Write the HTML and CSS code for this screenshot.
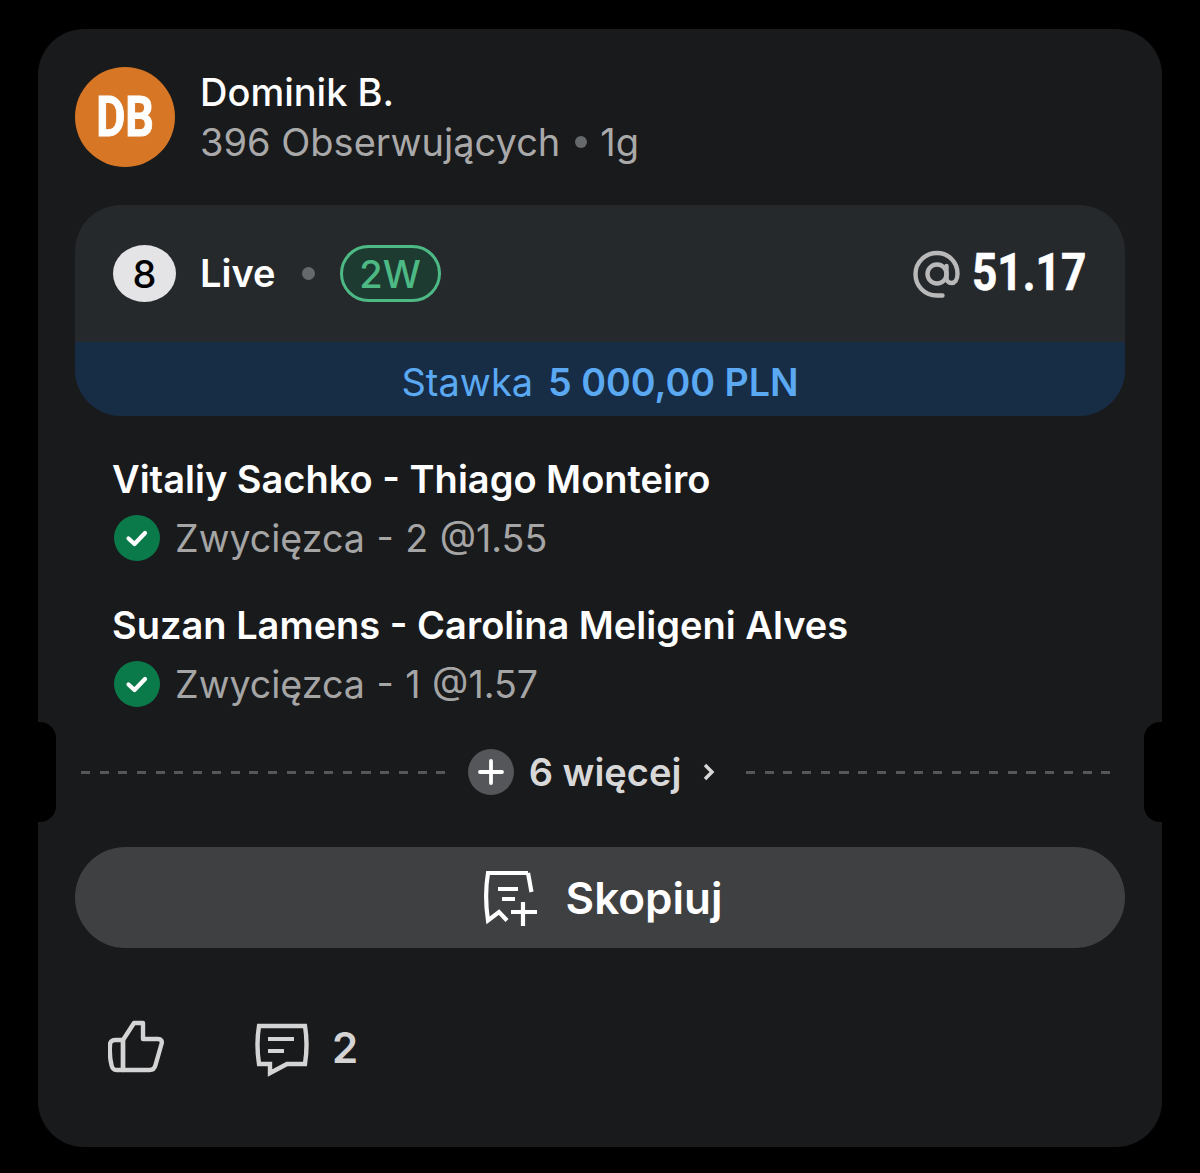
FILE: index.html
```html
<!DOCTYPE html>
<html lang="pl">
<head>
  <meta charset="UTF-8" />
  <meta name="viewport" content="width=device-width, initial-scale=1.0" />
  <title>Dominik B.</title>
  <link rel="stylesheet" href="styles.css">
</head>
<body>
  <main class="card">
    <span class="notch notch-left"></span>
    <span class="notch notch-right"></span>

    <header class="user">
      <div class="avatar"><span class="avatar-text">DB</span></div>
      <div class="user-info">
        <div class="user-name">Dominik B.</div>
        <div class="user-meta">396 Obserwujących<span class="meta-dot"></span>1g</div>
      </div>
    </header>

    <section class="bet">
      <div class="bet-top">
        <span class="count">8</span>
        <span class="live">Live</span>
        <span class="bet-dot"></span>
        <span class="badge">2W</span>
        <span class="odds">
          <svg class="at-icon" viewBox="0 0 48 48" width="48" height="48" fill="none" stroke="#b9b9b9" stroke-width="4.400" stroke-linecap="round">
            <circle cx="24" cy="24" r="9.500"/>
            <path d="M33.500 16v11.500c0 3.400 2 5.500 5 5.500s6-2.500 6-9.500C44.500 12 35.500 3 24 3S2.500 12 2.500 24 11.500 45.500 24 45.500h5.500"/>
          </svg>
          <span class="odds-value">51.17</span>
        </span>
      </div>
      <div class="stake">Stawka <strong>5 000,00 PLN</strong></div>
    </section>

    <section class="picks">
      <div class="pick">
        <div class="pick-title">Vitaliy Sachko - Thiago Monteiro</div>
        <div class="pick-result">
          <svg class="check" viewBox="0 0 46 46" width="46" height="46"><circle cx="23" cy="23" r="23" fill="#0b7a4b"/><path d="M14.500 23.500l6 5.500 10.500-11" fill="none" stroke="#fff" stroke-width="4.200" stroke-linecap="round" stroke-linejoin="round"/></svg>
          Zwycięzca - 2 @1.55
        </div>
      </div>
      <div class="pick">
        <div class="pick-title">Suzan Lamens - Carolina Meligeni Alves</div>
        <div class="pick-result">
          <svg class="check" viewBox="0 0 46 46" width="46" height="46"><circle cx="23" cy="23" r="23" fill="#0b7a4b"/><path d="M14.500 23.500l6 5.500 10.500-11" fill="none" stroke="#fff" stroke-width="4.200" stroke-linecap="round" stroke-linejoin="round"/></svg>
          Zwycięzca - 1 @1.57
        </div>
      </div>
    </section>

    <div class="more">
      <span class="dash"></span>
      <svg class="plus" viewBox="0 0 46 46" width="46" height="46"><circle cx="23" cy="23" r="23" fill="#555659"/><path d="M23 12v22M12 23h22" stroke="#fff" stroke-width="3.800" stroke-linecap="round"/></svg>
      <span class="more-text">6 więcej</span>
      <svg class="chevron" viewBox="0 0 14 20" width="14" height="20"><path d="M3 3l7 7-7 7" fill="none" stroke="#d8d8d8" stroke-width="3.400"/></svg>
      <span class="dash"></span>
    </div>

    <button class="copy-btn">
      <svg class="copy-icon" viewBox="0 0 54 56" width="54" height="56" fill="none" stroke="#fff" stroke-width="4.200">
        <path d="M44 3H4C1.500 18 1.500 34 4 50.500L15 42l8 8.500"/>
        <path d="M44 3c1 5 2 11 3.500 19"/>
        <path d="M14 19h20M18 29h13"/>
        <path d="M39 32v24M27 42h26"/>
      </svg>
      Skopiuj
    </button>

    <footer class="actions">
      <svg class="like" viewBox="0 0 56 54" width="56" height="54" fill="none" stroke="#d4d4d4" stroke-width="4.400" stroke-linejoin="round">
        <path d="M15 20H7c-3 0-5 2-5 5-.5 7 0 14 1.500 20 .5 3 2 5 5 5H15z"/>
        <path d="M15 20L26 3h9v16h15c3 0 4.500 2 3.500 5l-6 21c-.8 3.500-2.500 5-6 5H15z"/>
      </svg>
      <span class="comments">
        <svg class="comment-icon" viewBox="0 0 54 54" width="54" height="54" fill="none" stroke="#d4d4d4" stroke-width="4.400">
          <path d="M4 3h46c2 12 2 25 0 38H32L15 50v-9H4C2 28 2 15 4 3z"/>
          <path d="M13 16h26M13 28h16" stroke-width="4"/>
        </svg>
        <span class="comment-count">2</span>
      </span>
    </footer>
  </main>
</body>
</html>
```
FILE: styles.css
```css
* {
  box-sizing: border-box;
}
body {
  margin: 0;
  padding: 29px 38px 26px;
  height: 1173px;
  background: #000;
  font-family: Inter, "Noto Sans", sans-serif;
  color: #fff;
  overflow: hidden;
}
.card {
  position: relative;
  height: 1118px;
  padding: 38px 37px 0;
  background: #191a1c;
  border-radius: 46px;
}
.notch {
  position: absolute;
  top: 693px;
  width: 18px;
  height: 100px;
  background: #000;
}
.notch-left {
  left: 0;
  border-radius: 0 16px 16px 0;
}
.notch-right {
  right: 0;
  border-radius: 16px 0 0 16px;
}

.user {
  display: flex;
  align-items: center;
  gap: 25px;
}
.avatar {
  width: 100px;
  height: 100px;
  border-radius: 50%;
  background: #d77625;
  display: flex;
  align-items: center;
  justify-content: center;
}
.avatar-text {
  font-family: "Roboto", sans-serif;
  font-weight: 700;
  font-size: 56px;
  -webkit-text-stroke: 1px #fff;
  transform: scaleX(0.8);
}
.user-info {
  display: flex;
  flex-direction: column;
  gap: 4px;
}
.user-name {
  font-size: 38px;
  line-height: 46px;
  font-weight: 500;
}
.user-meta {
  font-size: 38px;
  line-height: 46px;
  color: #a9a9aa;
  display: flex;
  align-items: center;
}
.meta-dot {
  width: 12px;
  height: 12px;
  border-radius: 50%;
  background: #66696c;
  margin: 0 13px 0 15px;
}

.bet {
  margin-top: 38px;
  border-radius: 46px;
  overflow: hidden;
}
.bet-top {
  height: 137px;
  padding: 0 38px;
  background: #26292c;
  display: flex;
  align-items: center;
}
.count {
  width: 63px;
  height: 57px;
  border-radius: 50%;
  background: #e4e4e6;
  color: #000;
  font-size: 38px;
  font-weight: 500;
  display: flex;
  align-items: center;
  justify-content: center;
}
.live {
  margin: -2px 0 0 24px;
  font-size: 38px;
  font-weight: 600;
}
.bet-dot {
  width: 13px;
  height: 13px;
  border-radius: 50%;
  background: #66696c;
  margin: 0 25px 0 26px;
}
.badge {
  width: 101px;
  height: 57px;
  border: 3px solid #4db985;
  border-radius: 29px;
  background: #1d3b31;
  color: #4db985;
  font-size: 38px;
  font-weight: 500;
  display: flex;
  align-items: center;
  justify-content: center;
}
.odds {
  margin-left: auto;
  display: flex;
  align-items: center;
  gap: 11px;
}
.odds-value {
  width: 115px;
  margin-top: -3px;
  font-family: "Roboto", sans-serif;
  font-weight: 700;
  font-size: 52px;
  white-space: nowrap;
  -webkit-text-stroke: 0.6px #fff;
  transform: scaleX(0.85);
  transform-origin: left center;
}
.stake {
  height: 74px;
  padding-top: 6px;
  background: #172d46;
  color: #5aa9f2;
  font-size: 38px;
  display: flex;
  align-items: center;
  justify-content: center;
  gap: 15px;
}
.stake strong {
  font-size: 37.600px;
  font-weight: 600;
}

.picks {
  margin-top: 39px;
  padding: 0 38px;
}
.pick {
  margin-bottom: 40px;
}
.pick-title {
  margin-left: -1px;
  font-size: 38px;
  line-height: 48px;
  font-weight: 600;
}
.pick-result {
  margin-top: 12px;
  height: 46px;
  display: flex;
  align-items: center;
  gap: 15px;
  font-size: 37.600px;
  word-spacing: 1px;
  color: #a5a5a6;
}
.check {
  margin-left: 1px;
}

.more {
  margin-top: 42px;
  padding: 0 15px 0 6px;
  display: flex;
  align-items: center;
}
.dash {
  flex: 1;
  height: 3px;
  background: repeating-linear-gradient(90deg, #56575a 0 9px, transparent 9px 18.700px);
}
.plus {
  margin-left: 23px;
}
.more-text {
  margin-left: 15px;
  font-size: 38px;
  font-weight: 600;
  color: #d8d8d8;
}
.chevron {
  margin: 0 30px 0 21px;
}

.copy-btn {
  width: 100%;
  height: 101px;
  margin-top: 52px;
  padding: 0 0 0 6px;
  border: 0;
  border-radius: 51px;
  background: #3f4042;
  color: #fff;
  font-family: inherit;
  font-size: 44px;
  font-weight: 600;
  display: flex;
  align-items: center;
  justify-content: center;
  gap: 28px;
}

.actions {
  margin-top: 69px;
  padding-left: 33px;
  display: flex;
  align-items: center;
}
.comments {
  margin-left: 91px;
  display: flex;
  align-items: center;
  gap: 23px;
}
.comment-icon {
  margin-top: 6px;
}
.comment-count {
  font-size: 42px;
  font-weight: 600;
  color: #d4d4d4;
}
```
